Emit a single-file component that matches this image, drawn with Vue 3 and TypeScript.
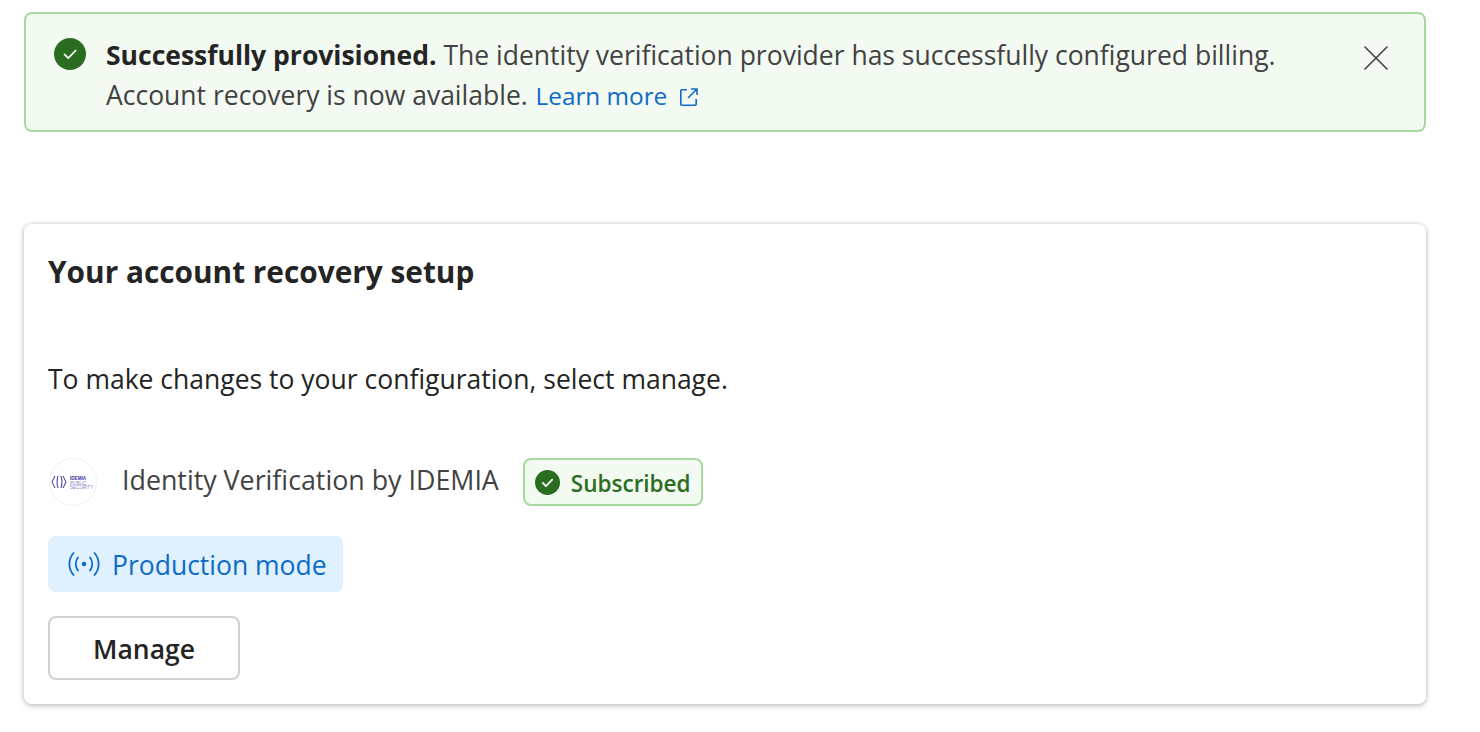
<script setup lang="ts">
const title = 'Your account recovery setup'
</script>

<template>
  <main class="page">
    <section class="alert">
      <svg class="alert-icon" viewBox="0 0 32 32" width="32" height="32">
        <circle cx="16" cy="16" r="16" fill="#2b6d20" />
        <path d="M10.5 16.4l3.700 3.700 7.500-7.600" fill="none" stroke="#fff" stroke-width="1.7" stroke-linecap="round" stroke-linejoin="round" />
      </svg>
      <p class="alert-text">
        <b>Successfully provisioned.</b> The identity verification provider has successfully configured billing.<br />
        Account recovery is now available. <a class="link">Learn more<svg class="ext" viewBox="0 0 18 18" width="18" height="18" fill="none" stroke="#0e6bc7" stroke-width="1.6">
            <path d="M7 1.800H1.800a1 1 0 0 0-1 1V16.200a1 1 0 0 0 1 1H15.200a1 1 0 0 0 1-1V11" />
            <path d="M11 1h6v6M16.700 1.300L8 10" />
          </svg></a>
      </p>
      <svg class="close" viewBox="0 0 24 24" width="24" height="24" fill="none" stroke="#424242" stroke-width="1.6" stroke-linecap="round">
        <path d="M1 1l22 22M23 1L1 23" />
      </svg>
    </section>

    <section class="card">
      <h2>{{ title }}</h2>
      <p class="desc">To make changes to your configuration, select manage.</p>
      <div class="provider">
        <div class="logo">
          <svg viewBox="0 0 48 48" width="48" height="48">
            <path d="M6 18l-3 6 3 6M9 18c-1.300 4-1.300 8 0 12M12 18c1.300 4 1.300 8 0 12M14 18l3 6-3 6" fill="none" stroke="#3a2d9c" stroke-width="1" />
            <text x="21" y="22" class="logo-text logo-strong">IDEMIA</text>
            <text x="21" y="26.500" class="logo-text">PUBLIC</text>
            <text x="21" y="31" class="logo-text">SECURITY</text>
          </svg>
        </div>
        <span class="name">Identity Verification by IDEMIA</span>
        <span class="badge">
          <svg viewBox="0 0 24 24" width="25" height="25">
            <circle cx="12" cy="12" r="12" fill="#2b6d20" />
            <path d="M7.500 12.400l3 3 6-6.200" fill="none" stroke="#fff" stroke-width="1.7" stroke-linecap="round" stroke-linejoin="round" />
          </svg>
          <span class="badge-label">Subscribed</span>
        </span>
      </div>
      <div class="mode">
        <svg viewBox="0 0 34 26" width="34" height="26" fill="none" stroke="#0e6bc7" stroke-width="1.8" stroke-linecap="round">
          <circle cx="17" cy="13" r="2.300" fill="#0e6bc7" stroke="none" />
          <path d="M11 6.500c-3 3.800-3 9.200 0 13M23 6.500c3 3.800 3 9.200 0 13M6.500 2c-5.500 6.400-5.500 15.600 0 22M27.500 2c5.500 6.400 5.500 15.600 0 22" />
        </svg>
        <span class="mode-label">Production mode</span>
      </div>
      <button class="manage" type="button"><span class="manage-label">Manage</span></button>
    </section>
  </main>
</template>

<style>
body { background: #fff; }
</style>

<style scoped>
.page {
  width: 1480px;
  height: 732px;
  padding: 12px 54px 0 24px;
  box-sizing: border-box;
  font-family: "Open Sans", "Noto Sans", sans-serif;
  color: #242424;
}
.alert {
  display: flex;
  align-items: flex-start;
  height: 120px;
  box-sizing: border-box;
  padding: 21px 36px 0 28px;
  background: #f2faf2;
  border: 2px solid #a7d8a0;
  border-radius: 8px;
}
.alert-icon { flex: none; margin: 3px 20px 0 0; }
.alert-text {
  flex: 1;
  margin: 0;
  font-size: 26.500px;
  line-height: 40px;
  color: #424242;
}
.alert-text b { color: #242424; }
.link { color: #0e6bc7; font-size: 24.300px; margin-left: 1px; }
.ext { vertical-align: -1px; margin-left: 13px; }
.close { flex: none; margin-top: 11px; }
.card {
  margin-top: 92px;
  height: 480px;
  box-sizing: border-box;
  padding: 28px 24px 24px;
  background: #fff;
  border-radius: 8px;
  box-shadow: 0 0 4px rgba(0,0,0,.14), 0 2px 6px rgba(0,0,0,.2);
}
h2 { margin: 0; font-size: 29.800px; line-height: 40px; font-weight: 700; color: #242424; }
.desc { margin: 67px 0 0; font-size: 26.500px; line-height: 40px; color: #242424; }
.provider { display: flex; align-items: center; margin-top: 59px; height: 48px; }
.logo { width: 48px; height: 48px; margin-left: 1px; border-radius: 50%; border: 1px solid #f0f0f0; box-sizing: border-box; overflow: hidden; flex: none; }
.logo svg { margin: -1px; display: block; }
.logo-text { font-size: 4.600px; fill: #8a84c4; font-family: "Liberation Sans", sans-serif; }
.logo-strong { fill: #3a2d9c; font-weight: 700; }
.name { margin: 0 0 6px 25px; font-size: 26.800px; color: #424242; }
.badge {
  display: inline-flex;
  align-items: center;
  gap: 11px;
  margin-left: 24px;
  height: 48px;
  padding: 0 10px;
  box-sizing: border-box;
  background: #f2faf2;
  border: 2px solid #a7d8a0;
  border-radius: 8px;
  color: #2b6d20;
  font-size: 22.500px;
  font-weight: 600;
}
.badge-label { margin-top: 2px; }
.mode {
  display: inline-flex;
  align-items: center;
  gap: 11px;
  height: 56px;
  margin-top: 30px;
  padding: 0 16px 0 19px;
  background: #dff0ff;
  border-radius: 8px;
  color: #0e6bc7;
  font-size: 26.500px;
}
.mode-label { margin-top: 2px; }
.manage {
  display: block;
  width: 192px;
  height: 64px;
  margin-top: 24px;
  padding: 2px 0 0;
  background: #fff;
  border: 2px solid #d1d1d1;
  border-radius: 8px;
  font-family: inherit;
  font-size: 26.500px;
  font-weight: 600;
  color: #242424;
}
</style>
